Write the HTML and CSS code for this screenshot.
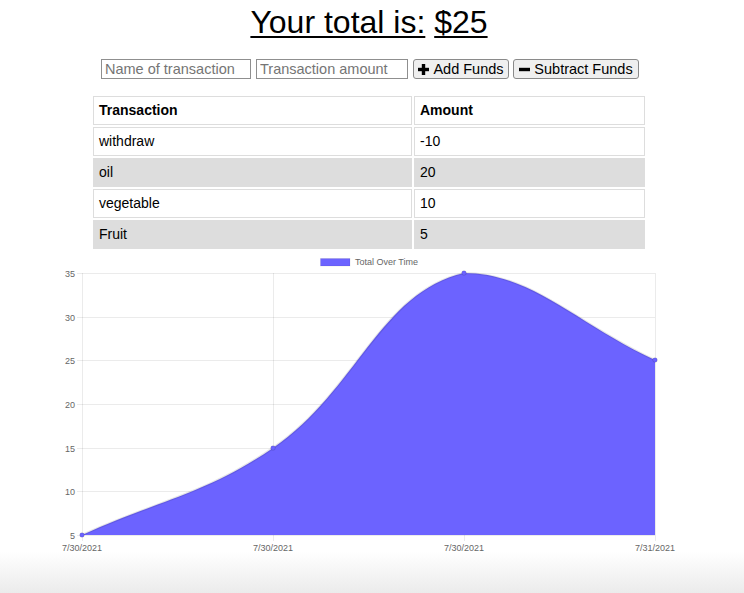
FILE: index.html
```html
<!DOCTYPE html>
<html lang="en">
<head>
<meta charset="utf-8">
<title>Budget Tracker</title>
<link rel="stylesheet" href="styles.css">
</head>
<body>
<div class="wrapper">
  <h1 class="total"><span class="u">Your total is:</span> <span class="u">$25</span></h1>
  <div class="form">
    <input class="field name" type="text" placeholder="Name of transaction">
    <input class="field amount" type="number" placeholder="Transaction amount">
    <button class="btn add"><svg class="ico" viewBox="0 0 11 11" width="11" height="11"><rect x="3.8" y="0" width="3.4" height="11"/><rect x="0" y="3.8" width="11" height="3.4"/></svg>Add Funds</button>
    <button class="btn sub"><svg class="ico" viewBox="0 0 11 11" width="11" height="11"><rect x="0" y="3.8" width="11" height="3.4"/></svg>Subtract Funds</button>
  </div>
  <table class="tx">
    <thead>
      <tr><th class="c1">Transaction</th><th>Amount</th></tr>
    </thead>
    <tbody>
      <tr><td>withdraw</td><td>-10</td></tr>
      <tr><td>oil</td><td>20</td></tr>
      <tr><td>vegetable</td><td>10</td></tr>
      <tr><td>Fruit</td><td>5</td></tr>
    </tbody>
  </table>
</div>
<svg class="chart" width="744" height="304" viewBox="0 251 744 304">
  <g class="legend">
    <rect x="320.5" y="258.5" width="29.5" height="7.5" fill="#6c63ff" stroke="rgba(0,0,0,0.1)" stroke-width="0.75"/>
    <text x="355" y="265" class="lbl">Total Over Time</text>
  </g>
  <g class="grid" stroke="rgba(0,0,0,0.1)" stroke-width="0.8">
    <line x1="77" y1="273.5" x2="655" y2="273.5"/>
    <line x1="77" y1="317.5" x2="655" y2="317.5"/>
    <line x1="77" y1="360.5" x2="655" y2="360.5"/>
    <line x1="77" y1="404.5" x2="655" y2="404.5"/>
    <line x1="77" y1="448.5" x2="655" y2="448.5"/>
    <line x1="77" y1="491.5" x2="655" y2="491.5"/>
    <line x1="77" y1="535.5" x2="655" y2="535.5"/>
    <line x1="82.5" y1="273" x2="82.5" y2="541"/>
    <line x1="273.5" y1="273" x2="273.5" y2="541"/>
    <line x1="464.5" y1="273" x2="464.5" y2="541"/>
    <line x1="655.5" y1="273" x2="655.5" y2="541"/>
  </g>
  <g class="ylabels">
    <text x="75" y="276.5">35</text>
    <text x="75" y="320.5">30</text>
    <text x="75" y="363.5">25</text>
    <text x="75" y="407.5">20</text>
    <text x="75" y="451.5">15</text>
    <text x="75" y="494.5">10</text>
    <text x="75" y="538.5">5</text>
  </g>
  <g class="xlabels">
    <text x="82" y="551">7/30/2021</text>
    <text x="273" y="551">7/30/2021</text>
    <text x="464" y="551">7/30/2021</text>
    <text x="655" y="551">7/31/2021</text>
  </g>
  <path d="M82,535 C158.4,500.2 204.6,494.9 273,448 C357.4,390.1 379.6,292.4 464,273 C532.4,273 578.6,325.2 655,360 L655,535 Z" fill="#6c63ff"/>
  <path d="M82,535 C158.4,500.2 204.6,494.9 273,448 C357.4,390.1 379.6,292.4 464,273 C532.4,273 578.6,325.2 655,360" fill="none" stroke="rgba(0,0,0,0.1)" stroke-width="2.2"/>
  <g fill="#6c63ff" stroke="rgba(0,0,0,0.15)" stroke-width="0.8">
    <circle cx="82" cy="535" r="2.3"/>
    <circle cx="273" cy="448" r="2.3"/>
    <circle cx="464" cy="273" r="2.3"/>
    <circle cx="655" cy="360" r="2.3"/>
  </g>
</svg>
</body>
</html>
```
FILE: styles.css
```css
html {
  height: 593px;
  background: linear-gradient(to bottom, #ffffff 0, #ffffff 552px, #ebebeb 593px);
}
body {
  margin: 0;
  height: 593px;
  overflow: hidden;
  font-family: "Liberation Sans", Arial, sans-serif;
  color: #000;
}
.wrapper {
  width: 738px;
}
.total {
  margin: 4px 0 0;
  font-size: 32px;
  font-weight: normal;
  line-height: 36px;
  text-align: center;
}
.u {
  text-decoration: underline;
  text-decoration-thickness: 2px;
  text-underline-offset: 3px;
}
.form {
  display: flex;
  justify-content: center;
  margin-top: 19px;
  height: 20px;
  padding-left: 2px;
}
.field {
  box-sizing: border-box;
  height: 20px;
  margin: 0 5px 0 0;
  padding: 0 3px;
  border: 1px solid #8f8f8f;
  border-radius: 0;
  font-family: "Liberation Sans", Arial, sans-serif;
  font-size: 14.5px;
  color: #000;
  background: #fff;
}
.field::placeholder {
  color: #757575;
}
.field.name { width: 150px; }
.field.amount { width: 152px; }
.field.amount::-webkit-inner-spin-button,
.field.amount::-webkit-outer-spin-button { -webkit-appearance: none; margin: 0; }
.btn {
  box-sizing: border-box;
  height: 20px;
  display: flex;
  align-items: center;
  justify-content: center;
  gap: 4px;
  margin: 0;
  padding: 0 4px;
  border: 1px solid #8a8a8a;
  border-radius: 3px;
  background: #efefef;
  font-family: "Liberation Sans", Arial, sans-serif;
  font-size: 14.5px;
  color: #000;
}
.btn.add { width: 96px; margin-right: 4px; }
.btn.sub { width: 126px; }
.ico { fill: #000; flex: none; }
.tx {
  margin: 15px 0 0 91px;
  width: 556px;
  border-collapse: separate;
  border-spacing: 2px;
  font-size: 14px;
  line-height: 15px;
}
.tx th, .tx td {
  border: 1px solid #dddddd;
  padding: 6px 5px;
  text-align: left;
}
.tx th { font-weight: bold; }
.tx .c1 { width: 307px; }
.tx tbody tr:nth-child(even) td { background: #dddddd; }
.chart {
  display: block;
}
.chart text {
  font-family: "Liberation Sans", Arial, sans-serif;
  font-size: 9px;
  fill: #666;
}
.ylabels text { text-anchor: end; }
.xlabels text { text-anchor: middle; }
```
